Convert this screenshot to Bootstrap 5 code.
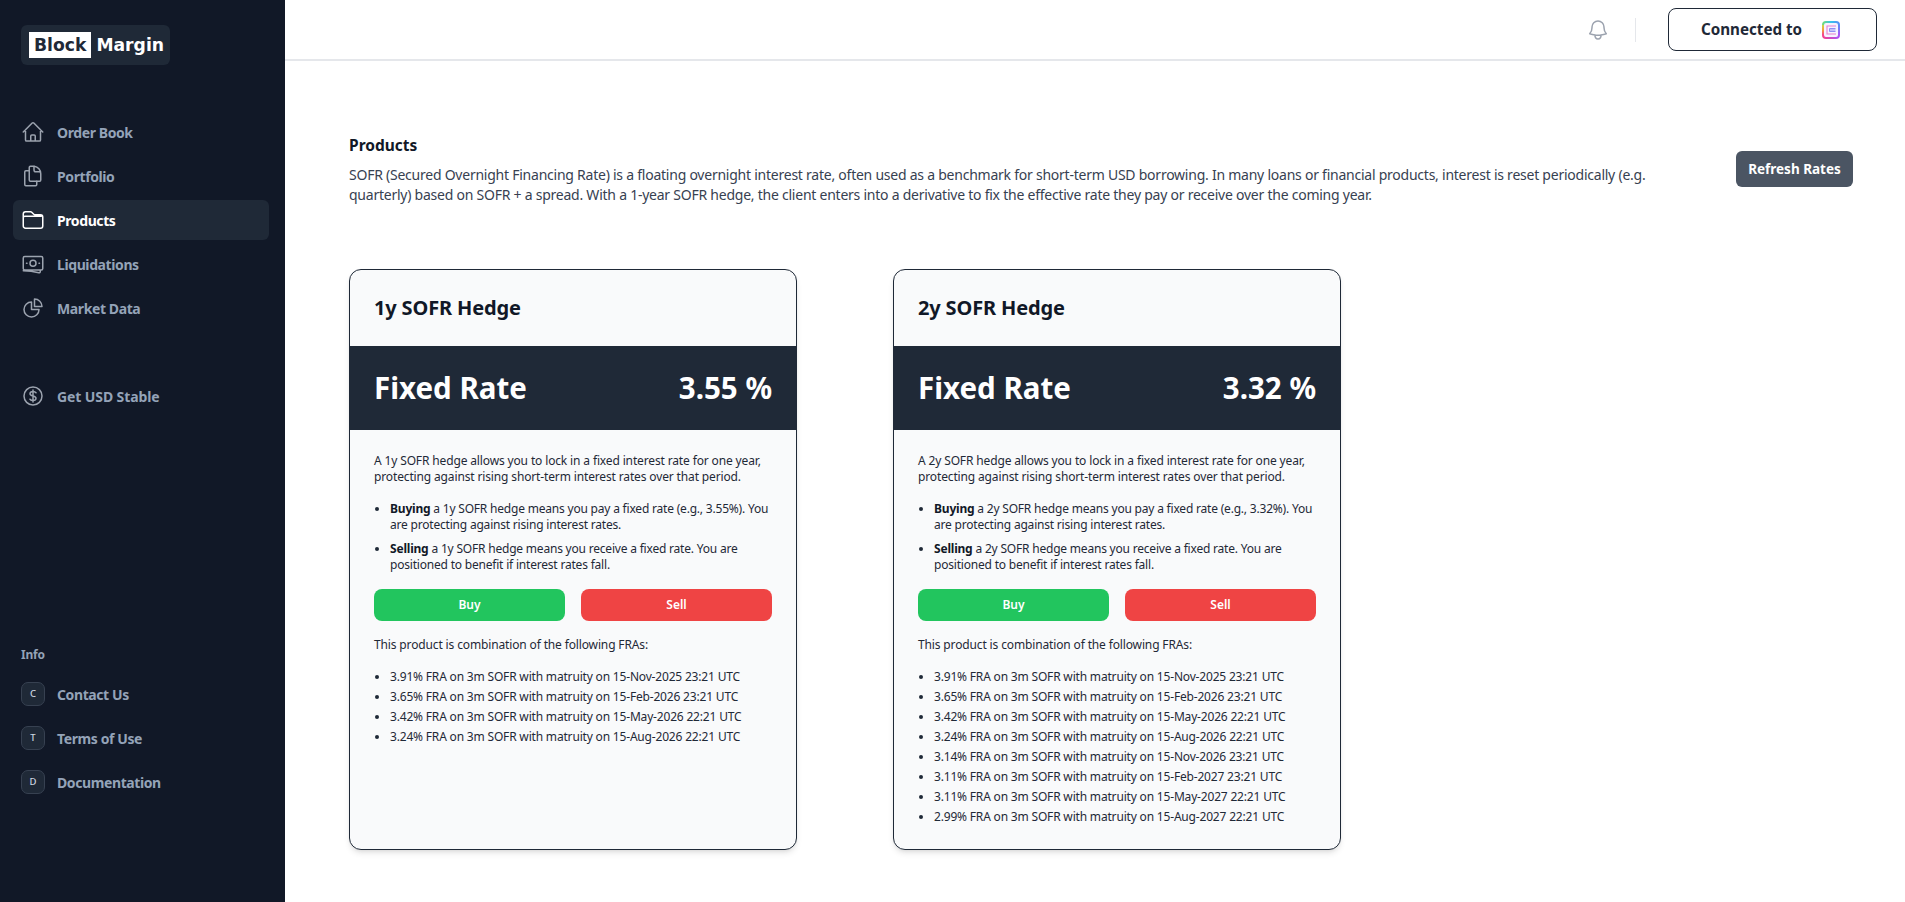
<!DOCTYPE html>
<html lang="en">
<head>
<meta charset="utf-8">
<title>Block Margin</title>
<link href="https://cdn.jsdelivr.net/npm/bootstrap@5.3.0/dist/css/bootstrap.min.css" rel="stylesheet">
<style>
body{font-family:"Noto Sans",sans-serif;color:#1f2937;background:#fff;height:902px;overflow:hidden}
.shell{height:902px}
.side{width:285px;background:#111827;padding:25px 16px 0 13px;flex:none}
.logo-wrap{margin-left:8px;width:149px;height:40px;background:#1f2937;border-radius:6px;padding:7px 8px;font-family:"DejaVu Sans",sans-serif;font-weight:700;font-size:17.200px;color:#fff;line-height:26px;gap:5px}
.logo-b{background:#fff;color:#1f2937;padding:0 5px;height:26px}
.side-nav{margin-top:47px}
.side-link{height:40px;margin-bottom:4px;padding:0 0 0 8px;border-radius:6px;color:#94a3b8;font-weight:700;font-size:14px;gap:12px;text-decoration:none;letter-spacing:-.4px}
.side-link svg{width:24px;height:24px;flex:none;color:#9ca3af}
.side-link.on{background:#1f2937;color:#fff}
.side-link.on svg{color:#fff}
.gap-link{margin-top:48px;letter-spacing:-.1px}
.info-head{margin:230px 0 0 8px;color:#94a3b8;font-weight:700;font-size:12px;height:24px;line-height:18px;letter-spacing:-.2px}
.info-list{margin-top:4px}
.side-link .tile{width:24px;height:24px;background:#1f2937;border:1px solid #374151;border-radius:7px;font-size:9.500px;font-weight:500;color:#cbd5e1;flex:none;letter-spacing:0}
.top{height:61px;border-bottom:2px solid #e5e7eb;padding-right:28px;flex:none}
.bell{width:24px;height:24px;color:#9ca3af}
.vsep{width:1px;height:24px;background:#e5e7eb;margin:0 32px 0 25px}
.conn{width:209px;height:43px;border:1px solid #1f2937;border-radius:8px;background:#fff;color:#1f2937;font-weight:700;font-size:15.200px;gap:20px;padding:0 4px 0 0}
.content{padding:72px 52px 0 64px}
.intro-title{font-size:15.500px;font-weight:700;color:#111827;line-height:24px;margin-bottom:8px}
.intro-text{font-size:14px;line-height:20px;color:#374151;width:1330px;letter-spacing:-.24px;margin:0}
.refresh{width:117px;height:36px;background:#4b5563;color:#fff;border:0;border-radius:6px;font-weight:700;font-size:13.500px;padding:0;margin-top:18px}
.hedges{margin-top:64px;gap:96px}
.hedge{width:448px;height:581px;background:#f9fafb;border:1px solid #1f2937;border-radius:12px;box-shadow:0 4px 6px -1px rgba(0,0,0,.1),0 2px 4px -2px rgba(0,0,0,.1);overflow:hidden}
.hedge-h{height:76px;padding:0 24px;font-size:20px;font-weight:700;color:#111827;letter-spacing:-.15px}
.hedge-r{height:84px;background:#1f2937;color:#fff;padding:0 24px;font-size:29.500px;font-weight:700}
.hedge-b{padding:23px 24px 0;font-size:12px;line-height:16px;color:#1f2937;letter-spacing:-.14px}
.hedge-b p{margin:0 0 16px}
.hedge-b b{color:#111827}
.why{padding-left:16px;margin:0 0 16px;letter-spacing:-.2px}
.why li{margin-bottom:8px}
.deal{gap:16px;margin-bottom:16px}
.deal .btn{flex:1;height:32px;border:0;border-radius:8px;color:#fff;font-size:12px;font-weight:600;padding:0}
.btn-b{background:#22c55e}
.btn-s{background:#ef4444}
.hedge-b p.lead-in{margin-bottom:14px}
.fras{padding-left:16px;margin:0;line-height:20px;letter-spacing:-.18px}
</style>
</head>
<body>
<div class="shell d-flex">
<aside class="side">
<div class="logo-wrap d-flex"><span class="logo-b">Block</span><span>Margin</span></div>
<nav class="side-nav">
<a class="side-link d-flex align-items-center" href="#"><svg viewBox="0 0 24 24" fill="none" stroke="currentColor" stroke-width="1.5" stroke-linecap="round" stroke-linejoin="round"><path d="M2.250 12 11.200 3.050a1.130 1.130 0 0 1 1.600 0L21.750 12M4.500 9.750V19.900c0 .6.5 1.100 1.100 1.100H9.750v-4.900c0-.6.5-1.100 1.100-1.100h2.300c.6 0 1.100.5 1.100 1.100V21h4.150c.6 0 1.100-.5 1.100-1.100V9.750M8.250 21h8.250"/></svg>Order Book</a>
<a class="side-link d-flex align-items-center" href="#"><svg viewBox="0 0 24 24" fill="none" stroke="currentColor" stroke-width="1.5" stroke-linecap="round" stroke-linejoin="round"><path d="M8.250 6.750H4.880c-.63 0-1.130.5-1.130 1.130v12.740c0 .63.5 1.130 1.130 1.130h9.740c.63 0 1.130-.5 1.130-1.130V17.250"/><path d="M9.380 2.250h3.870a7.500 7.500 0 0 1 6.500 7.500v6.370c0 .63-.5 1.130-1.130 1.130H9.380c-.63 0-1.130-.5-1.130-1.130V3.380c0-.63.5-1.130 1.130-1.130Z"/><path d="M13 2.500v3.500c0 1 .8 1.800 1.800 1.800h4.500"/></svg>Portfolio</a>
<a class="side-link on d-flex align-items-center" href="#"><svg viewBox="0 0 24 24" fill="none" stroke="currentColor" stroke-width="1.5" stroke-linecap="round" stroke-linejoin="round"><path d="M2.250 12.750V6c0-1.240 1-2.250 2.250-2.250h5.130c.4 0 .78.160 1.060.440l2.120 2.120c.28.280.660.440 1.060.440h5.630c1.240 0 2.250 1 2.250 2.250v9c0 1.240-1 2.250-2.250 2.250H4.500A2.250 2.250 0 0 1 2.250 18V9.750c0-.830.670-1.500 1.500-1.500h16.500"/></svg>Products</a>
<a class="side-link d-flex align-items-center" href="#"><svg viewBox="0 0 24 24" fill="none" stroke="currentColor" stroke-width="1.5" stroke-linecap="round" stroke-linejoin="round"><path d="M2.250 18.750c5.400 0 10.600.7 15.600 2 .7.200 1.400-.3 1.400-1.100v-.9M3.750 4.500h16.500c.830 0 1.500.670 1.500 1.500v10.500c0 .830-.670 1.500-1.500 1.500H3.750c-.830 0-1.500-.670-1.500-1.500V6c0-.830.670-1.500 1.500-1.500Z"/><circle cx="12" cy="11.250" r="3"/><path d="M5.500 11.250h.5M18 11.250h.5"/></svg>Liquidations</a>
<a class="side-link d-flex align-items-center" href="#"><svg viewBox="0 0 24 24" fill="none" stroke="currentColor" stroke-width="1.5" stroke-linecap="round" stroke-linejoin="round"><path d="M10.500 6a7.500 7.500 0 1 0 7.500 7.500h-7.500V6Z"/><path d="M13.500 10.500H21A7.500 7.500 0 0 0 13.500 3v7.500Z"/></svg>Market Data</a>
<a class="side-link gap-link d-flex align-items-center" href="#"><svg viewBox="0 0 24 24" fill="none" stroke="currentColor" stroke-width="1.5" stroke-linecap="round" stroke-linejoin="round"><circle cx="12" cy="12" r="9"/><path d="M12 6v12M15 8.800c-.6-.8-1.700-1.300-3-1.300-1.800 0-3 1-3 2.300 0 3 6 1.500 6 4.400 0 1.300-1.200 2.300-3 2.300-1.300 0-2.400-.5-3-1.300"/></svg>Get USD Stable</a>
</nav>
<div class="info-head">Info</div>
<div class="info-list">
<a class="side-link d-flex align-items-center" href="#"><span class="tile d-flex align-items-center justify-content-center">C</span>Contact Us</a>
<a class="side-link d-flex align-items-center" href="#"><span class="tile d-flex align-items-center justify-content-center">T</span>Terms of Use</a>
<a class="side-link d-flex align-items-center" href="#"><span class="tile d-flex align-items-center justify-content-center">D</span>Documentation</a>
</div>
</aside>
<div class="flex-grow-1 d-flex flex-column">
<header class="top d-flex align-items-center justify-content-end">
<svg class="bell" viewBox="0 0 24 24" fill="none" stroke="currentColor" stroke-width="1.5" stroke-linecap="round" stroke-linejoin="round"><path d="M14.860 17.080a24 24 0 0 0 5.450-1.310A8.970 8.970 0 0 1 18 9.750V9A6 6 0 0 0 6 9v.75a8.970 8.970 0 0 1-2.310 6.020c1.730.640 3.560 1.090 5.450 1.310m5.720 0a24.300 24.300 0 0 1-5.720 0m5.720 0a3 3 0 1 1-5.720 0"/></svg>
<span class="vsep"></span>
<button class="conn btn d-flex align-items-center justify-content-center" type="button">Connected to
<svg width="18" height="18" viewBox="0 0 18 18" fill="none"><defs>
<linearGradient id="gt" gradientUnits="userSpaceOnUse" x1="1" y1="0" x2="17" y2="0"><stop offset="0" stop-color="#6fdc7c"/><stop offset=".5" stop-color="#35c4ee"/><stop offset="1" stop-color="#5b8df6"/></linearGradient>
<linearGradient id="gr" gradientUnits="userSpaceOnUse" x1="0" y1="4" x2="0" y2="14"><stop offset="0" stop-color="#5b8df6"/><stop offset="1" stop-color="#a855f7"/></linearGradient>
<linearGradient id="gb" gradientUnits="userSpaceOnUse" x1="1" y1="0" x2="17" y2="0"><stop offset="0" stop-color="#f43f8e"/><stop offset="1" stop-color="#a855f7"/></linearGradient>
<linearGradient id="gl" gradientUnits="userSpaceOnUse" x1="0" y1="4" x2="0" y2="14"><stop offset="0" stop-color="#c8d94a"/><stop offset=".5" stop-color="#f59e3a"/><stop offset="1" stop-color="#f43f8e"/></linearGradient>
</defs><rect x="1" y="1" width="16" height="16" rx="3" fill="#f6f2ff"/><path d="M1 4a3 3 0 0 1 3-3h10a3 3 0 0 1 3 3" stroke="url(#gt)" stroke-width="2"/><path d="M17 4v10" stroke="url(#gr)" stroke-width="2"/><path d="M1 14a3 3 0 0 0 3 3h10a3 3 0 0 0 3-3" stroke="url(#gb)" stroke-width="2"/><path d="M1 4v10" stroke="url(#gl)" stroke-width="2"/><path d="M14 5H5v8h9" stroke="#e77fd0" stroke-width="1.100"/><path d="M13.500 7.500H7.500v3h6M7.500 9h6" stroke="#8f8ff5" stroke-width="1"/></svg>
</button>
</header>
<main class="content">
<div class="d-flex justify-content-between align-items-start">
<div>
<div class="intro-title">Products</div>
<p class="intro-text">SOFR (Secured Overnight Financing Rate) is a floating overnight interest rate, often used as a benchmark for short-term USD borrowing. In many loans or financial products, interest is reset periodically (e.g. quarterly) based on SOFR + a spread. With a 1-year SOFR hedge, the client enters into a derivative to fix the effective rate they pay or receive over the coming year.</p>
</div>
<button class="refresh btn" type="button">Refresh Rates</button>
</div>
<div class="hedges d-flex">
<section class="hedge">
<div class="hedge-h d-flex align-items-center">1y SOFR Hedge</div>
<div class="hedge-r d-flex align-items-center justify-content-between"><span>Fixed Rate</span><span>3.55 %</span></div>
<div class="hedge-b">
<p>A 1y SOFR hedge allows you to lock in a fixed interest rate for one year, protecting against rising short-term interest rates over that period.</p>
<ul class="why">
<li><b>Buying</b> a 1y SOFR hedge means you pay a fixed rate (e.g., 3.55%). You are protecting against rising interest rates.</li>
<li><b>Selling</b> a 1y SOFR hedge means you receive a fixed rate. You are positioned to benefit if interest rates fall.</li>
</ul>
<div class="deal d-flex"><button class="btn btn-b" type="button">Buy</button><button class="btn btn-s" type="button">Sell</button></div>
<p class="lead-in">This product is combination of the following FRAs:</p>
<ul class="fras">
<li>3.91% FRA on 3m SOFR with matruity on 15-Nov-2025 23:21 UTC</li>
<li>3.65% FRA on 3m SOFR with matruity on 15-Feb-2026 23:21 UTC</li>
<li>3.42% FRA on 3m SOFR with matruity on 15-May-2026 22:21 UTC</li>
<li>3.24% FRA on 3m SOFR with matruity on 15-Aug-2026 22:21 UTC</li>
</ul>
</div>
</section>
<section class="hedge">
<div class="hedge-h d-flex align-items-center">2y SOFR Hedge</div>
<div class="hedge-r d-flex align-items-center justify-content-between"><span>Fixed Rate</span><span>3.32 %</span></div>
<div class="hedge-b">
<p>A 2y SOFR hedge allows you to lock in a fixed interest rate for one year, protecting against rising short-term interest rates over that period.</p>
<ul class="why">
<li><b>Buying</b> a 2y SOFR hedge means you pay a fixed rate (e.g., 3.32%). You are protecting against rising interest rates.</li>
<li><b>Selling</b> a 2y SOFR hedge means you receive a fixed rate. You are positioned to benefit if interest rates fall.</li>
</ul>
<div class="deal d-flex"><button class="btn btn-b" type="button">Buy</button><button class="btn btn-s" type="button">Sell</button></div>
<p class="lead-in">This product is combination of the following FRAs:</p>
<ul class="fras">
<li>3.91% FRA on 3m SOFR with matruity on 15-Nov-2025 23:21 UTC</li>
<li>3.65% FRA on 3m SOFR with matruity on 15-Feb-2026 23:21 UTC</li>
<li>3.42% FRA on 3m SOFR with matruity on 15-May-2026 22:21 UTC</li>
<li>3.24% FRA on 3m SOFR with matruity on 15-Aug-2026 22:21 UTC</li>
<li>3.14% FRA on 3m SOFR with matruity on 15-Nov-2026 23:21 UTC</li>
<li>3.11% FRA on 3m SOFR with matruity on 15-Feb-2027 23:21 UTC</li>
<li>3.11% FRA on 3m SOFR with matruity on 15-May-2027 22:21 UTC</li>
<li>2.99% FRA on 3m SOFR with matruity on 15-Aug-2027 22:21 UTC</li>
</ul>
</div>
</section>
</div>
</main>
</div>
</div>
<script src="https://cdn.jsdelivr.net/npm/bootstrap@5.3.0/dist/js/bootstrap.bundle.min.js"></script>
</body>
</html>
